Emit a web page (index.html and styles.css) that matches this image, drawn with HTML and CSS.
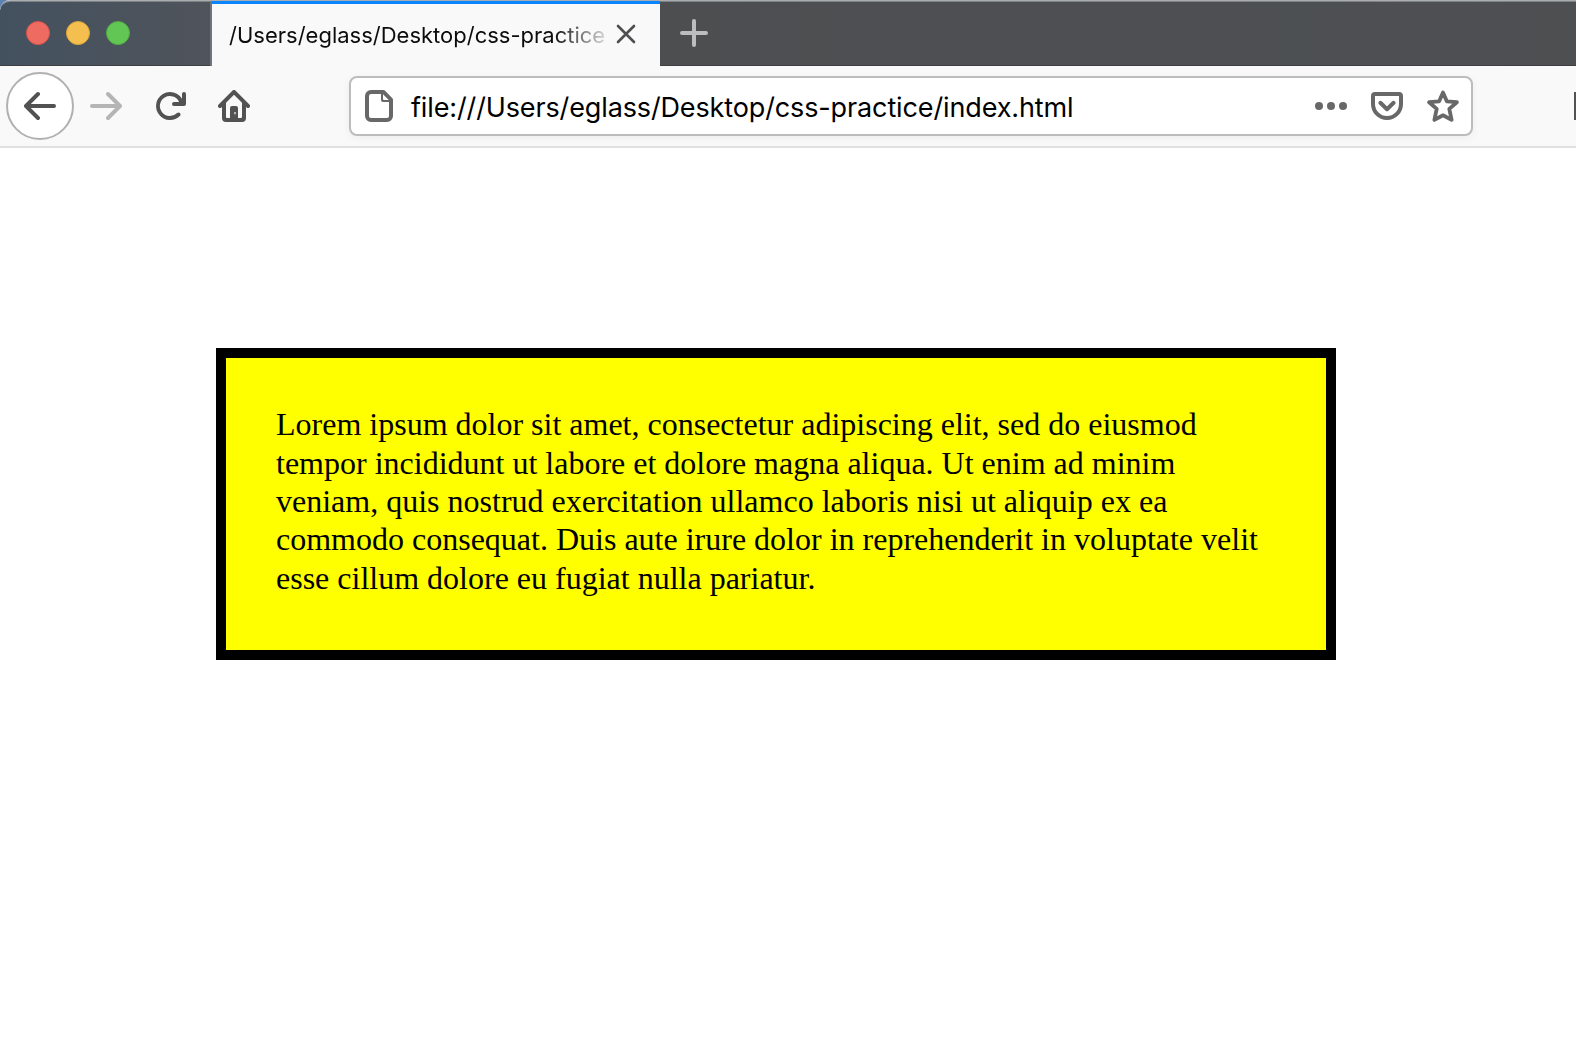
FILE: index.html
```html
<!DOCTYPE html>
<html lang="en">
<head>
<meta charset="utf-8">
<title>css-practice</title>
<link rel="stylesheet" href="styles.css">
</head>
<body>
<div class="window">
  <header class="titlebar">
    <div class="controls">
      <span class="light light-close"></span>
      <span class="light light-minimize"></span>
      <span class="light light-zoom"></span>
    </div>
    <div class="tab">
      <span class="tab-title">/Users/eglass/Desktop/css-practice</span>
      <svg class="tab-close" viewBox="0 0 20 20"><path d="M2 2l16 16M18 2L2 18"/></svg>
    </div>
    <svg class="new-tab" viewBox="0 0 28 28"><path d="M14 2v24M2 14h24"/></svg>
  </header>
  <nav class="toolbar">
    <span class="back">
      <svg class="icon" viewBox="0 0 16 16"><path d="M15 7H3.414l4.293-4.293a1 1 0 0 0-1.414-1.414l-6 6a1 1 0 0 0 0 1.414l6 6a1 1 0 0 0 1.414-1.414L3.414 9H15a1 1 0 0 0 0-2z"/></svg>
    </span>
    <svg class="icon forward" viewBox="0 0 16 16"><path d="M1 7h11.586L8.293 2.707a1 1 0 0 1 1.414-1.414l6 6a1 1 0 0 1 0 1.414l-6 6a1 1 0 0 1-1.414-1.414L12.586 9H1a1 1 0 0 1 0-2z"/></svg>
    <svg class="icon reload" viewBox="0 0 16 16"><path d="M15 1a1 1 0 0 0-1 1v2.418A6.995 6.995 0 1 0 8 15a6.954 6.954 0 0 0 4.95-2.05 1 1 0 0 0-1.414-1.414A5.019 5.019 0 1 1 12.549 6H10a1 1 0 0 0 0 2h5a1 1 0 0 0 1-1V2a1 1 0 0 0-1-1z"/></svg>
    <svg class="icon home" viewBox="0 0 16 16"><path fill-rule="evenodd" d="M15.707 7.293l-7-7a1 1 0 0 0-1.414 0l-7 7a1 1 0 0 0 1.414 1.414L2 8.414V14a2 2 0 0 0 2 2h8a2 2 0 0 0 2-2V8.414l.293.293a1 1 0 0 0 1.414-1.414zM12 13.5a.5.5 0 0 1-.5.5H10V9a1 1 0 0 0-1-1H7a1 1 0 0 0-1 1v5H4.500a.5.5 0 0 1-.5-.5V6.414l4-4 4 4zM8.200 11h.6v1.100h-.6z"/></svg>
    <div class="urlbar">
      <svg class="icon" viewBox="0 0 16 16"><path fill-rule="evenodd" d="M10.200 0H4a3 3 0 0 0-3 3v10a3 3 0 0 0 3 3h8a3 3 0 0 0 3-3V4.800a1 1 0 0 0-.3-.7L10.900.3a1 1 0 0 0-.7-.3zM4 2h5v3a1 1 0 0 0 1 1h3v7a1 1 0 0 1-1 1H4a1 1 0 0 1-1-1V3a1 1 0 0 1 1-1zM10 2.100L12.900 5H10.500a.5.500 0 0 1-.5-.5z"/></svg>
      <span class="url">file:///Users/eglass/Desktop/css-practice/index.html</span>
      <svg class="icon" viewBox="0 0 16 16"><circle cx="2" cy="8" r="2"/><circle cx="8" cy="8" r="2"/><circle cx="14" cy="8" r="2"/></svg>
      <svg class="icon" viewBox="0 0 16 16"><path class="line" d="M2 2h12a1 1 0 0 1 1 1v4a7 7 0 0 1-14 0V3a1 1 0 0 1 1-1z"/><path class="line" d="M4.700 6.400L8 9.600l3.300-3.200"/></svg>
      <svg class="icon" viewBox="0 0 16 16"><path class="line star" d="M8 1.200l1.900 4.450 5.050.45-3.800 3.350 1.150 5.500L8 12.650l-4.300 2.300 1.150-5.500-3.800-3.350 5.050-.45z"/></svg>
    </div>
    <span class="library"></span>
  </nav>
  <main class="page">
    <p class="yellow-box">Lorem ipsum dolor sit amet, consectetur adipiscing elit, sed do eiusmod tempor incididunt ut labore et dolore magna aliqua. Ut enim ad minim veniam, quis nostrud exercitation ullamco laboris nisi ut aliquip ex ea commodo consequat. Duis aute irure dolor in reprehenderit in voluptate velit esse cillum dolore eu fugiat nulla pariatur.</p>
  </main>
</div>
</body>
</html>
```
FILE: styles.css
```css
* { box-sizing: border-box; }

body {
  margin: 0;
  background: #5b83b3;
  font-family: Inter, "Liberation Sans", sans-serif;
}

.window {
  height: 1042px;
  overflow: hidden;
  background: #fff;
  border-top-left-radius: 10px;
}

.titlebar {
  display: flex;
  height: 66px;
  border-top: 1px solid #a9adaf;
  border-top-left-radius: 10px;
  background: linear-gradient(90deg, #43515f 0, #50545b 210px, #4d4e50 660px, #4d5053 1300px, #4e4f51 100%);
  box-shadow: inset 0 -1px #3d3f43, inset 0 1px #7d8284;
}

.controls {
  display: flex;
  gap: 16px;
  width: 212px;
  padding: 20px 0 0 26px;
  border-right: 2px solid #70757d;
}

.light {
  width: 24px;
  height: 24px;
  border: 1px solid;
  border-radius: 50%;
}

.light-close { background: #ed6b60; border-color: #d9554b; }
.light-minimize { background: #f5bf4f; border-color: #dba53b; }
.light-zoom { background: #62c655; border-color: #50ad41; }

.tab {
  display: flex;
  width: 448px;
  padding-left: 17px;
  border-top: 3px solid #0a84ff;
  background: #f9f9fa;
}

.tab-title {
  width: 376px;
  height: 62px;
  color: #0c0c0d;
  font-size: 22px;
  line-height: 62px;
  white-space: nowrap;
  -webkit-mask-image: linear-gradient(90deg, #000 325px, transparent 385px);
  mask-image: linear-gradient(90deg, #000 325px, transparent 385px);
}

.tab-close {
  width: 20px;
  height: 20px;
  margin: 20px 0 0 11px;
  fill: none;
  stroke: #4e4e50;
  stroke-width: 2.6;
  stroke-linecap: round;
}

.new-tab {
  width: 28px;
  height: 28px;
  margin: 18px 0 0 20px;
  fill: none;
  stroke: #bdbdbe;
  stroke-width: 4;
  stroke-linecap: round;
}

.toolbar {
  display: flex;
  align-items: center;
  height: 82px;
  padding-left: 6px;
  border-bottom: 2px solid #e0e0e1;
  background: #f9f9fa;
}

.icon {
  flex: none;
  width: 32px;
  height: 32px;
  fill: #525253;
}

.back {
  display: flex;
  align-items: center;
  justify-content: center;
  width: 68px;
  height: 68px;
  border: 2px solid #b1b1b1;
  border-radius: 50%;
  background: #fff;
}

.forward { margin-left: 16px; fill: #b5b5b6; }
.reload { margin-left: 32px; }
.home { margin-left: 32px; }

.urlbar {
  display: flex;
  align-items: center;
  gap: 24px;
  width: 1124px;
  height: 60px;
  margin-left: 99px;
  padding: 0 12px;
  border: 2px solid #bcbcbd;
  border-radius: 8px;
  background: #fff;
  box-shadow: 0 2px 8px rgba(0, 0, 0, 0.05);
}

.urlbar .icon { fill: #686868; }

.urlbar .line {
  fill: none;
  stroke: #686868;
  stroke-width: 2;
  stroke-linecap: round;
  stroke-linejoin: round;
}

.urlbar .star { stroke-width: 1.9; }

.url {
  flex: 1;
  margin-left: -8px;
  padding-top: 3px;
  color: #000;
  font-size: 27px;
  letter-spacing: -0.13px;
  line-height: 53px;
  white-space: nowrap;
}

.library {
  width: 2px;
  height: 28px;
  margin-left: 101px;
  background: #525253;
}

.page { padding: 200px 0 0 216px; }

.yellow-box {
  width: 1120px;
  margin: 0;
  padding: 47.15px 50px 52.85px;
  border: 10px solid #000;
  background: #ff0;
  color: #000;
  font-family: "Liberation Serif", serif;
  font-size: 32px;
  line-height: 38.4px;
}
```
